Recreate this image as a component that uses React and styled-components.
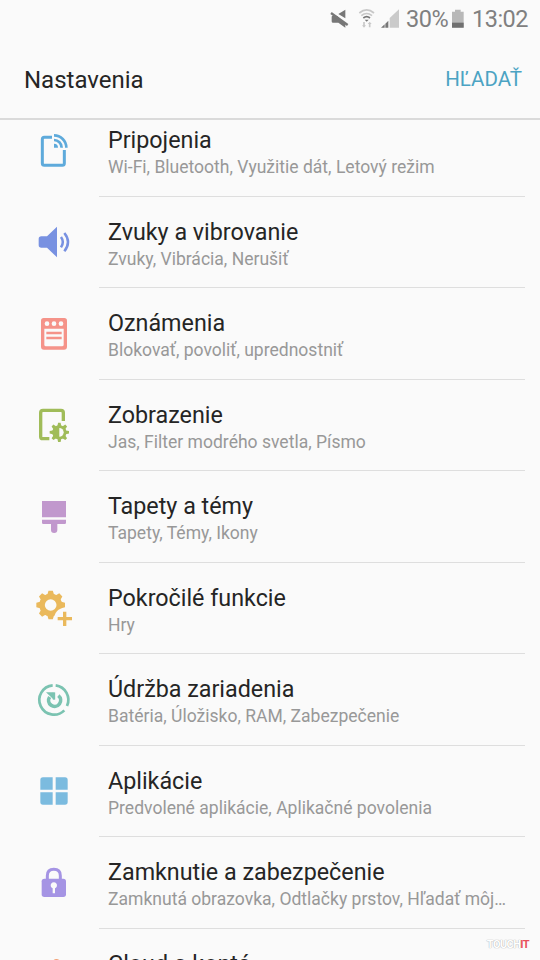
import React from 'react';
import styled, { createGlobalStyle } from 'styled-components';

const GlobalStyle = createGlobalStyle`
  html, body { margin: 0; padding: 0; background: #fafafa; overflow: hidden; }
  * { box-sizing: border-box; }
`;

const Screen = styled.main`
  position: relative;
  display: flex;
  flex-direction: column;
  width: 540px;
  height: 960px;
  overflow: hidden;
  background: #fafafa;
  font-family: Roboto, "Noto Sans", sans-serif;
`;

const StatusBar = styled.div`
  display: flex;
  align-items: center;
  justify-content: flex-end;
  height: 38px;
  padding-right: 12px;
  color: #808080;
  font-size: 23.5px;
  line-height: 38px;
`;

const StatusIcons = styled.svg`
  width: 80px;
  height: 38px;
  margin-right: 6px;
`;

const Percent = styled.span`
  width: 42px;
  white-space: nowrap;
  letter-spacing: -0.5px;
`;

const Battery = styled.svg`
  width: 14px;
  height: 38px;
  margin-right: 7px;
  margin-left: 3px;
`;

const Clock = styled.span`
  width: 56px;
  white-space: nowrap;
  text-align: right;
  letter-spacing: -0.5px;
`;

const Header = styled.header`
  display: flex;
  align-items: center;
  justify-content: space-between;
  height: 82px;
  padding: 0 18px 0 24px;
  border-bottom: 2px solid #dadada;
`;

const Heading = styled.h1`
  margin: 3px 0 0;
  color: #252525;
  font-size: 24px;
  font-weight: 400;
  line-height: 28px;
`;

const SearchButton = styled.button`
  margin-top: 1px;
  padding: 0;
  border: 0;
  background: none;
  color: #4ba3c3;
  font: 400 20.5px/28px Roboto, sans-serif;
`;

const List = styled.ul`
  flex: 1;
  min-height: 0;
  margin: 0;
  padding: 0;
  overflow: hidden;
  list-style: none;
`;

const Row = styled.li`
  display: flex;
  height: 91.5px;
  padding: 0 15px 0 24px;

  &:first-child { margin-top: -15px; }
`;

const RowIcon = styled.svg`
  flex: none;
  width: 60px;
  height: 60px;
  margin: ${({ $top }) => $top}px 15px 0 0;
`;

const RowText = styled.div`
  flex: 1;
  min-width: 0;
  padding: 21px 0 0 9px;
  border-bottom: 1px solid #dedede;
`;

const Title = styled.div`
  color: #252525;
  font-size: 23.3px;
  line-height: 28px;
  white-space: nowrap;
`;

const Summary = styled.div`
  margin-top: 3px;
  color: #989898;
  font-size: 17.55px;
  line-height: 21px;
  white-space: nowrap;
`;

const Watermark = styled.div`
  position: absolute;
  right: 11px;
  bottom: 8px;
  color: #fff;
  font: 700 11px/14px Roboto, sans-serif;
  letter-spacing: -0.6px;
  text-shadow: 0 0 1px #aaa, 0 0 1px #bbb;
`;

const WatermarkAccent = styled.span`
  color: #e8505a;
  text-shadow: none;
`;

const gearPath = (cx, cy, outer, inner, half) => {
  const points = [];
  for (let i = 0; i < 8; i += 1) {
    const angle = (i * Math.PI) / 4;
    [[inner, -half * 1.5], [outer, -half], [outer, half], [inner, half * 1.5]].forEach(([r, t]) => {
      points.push(
        `${(cx + r * Math.cos(angle) - t * Math.sin(angle)).toFixed(1)} ${(cy + r * Math.sin(angle) + t * Math.cos(angle)).toFixed(1)}`
      );
    });
  }
  return `M${points.join('L')}Z`;
};

const icons = {
  connections: (
    <g fill="none" stroke="#5eaadb" strokeWidth="9">
      <path d="M84 52H61q-6 0-6 6v72q0 6 6 6h54q6 0 6-6V90" />
      <path d="M90 46a37 37 0 0 1 37 37M90 60a23 23 0 0 1 23 23" strokeWidth="8" />
      <path d="M90 71a12 12 0 0 1 12 12H90z" fill="#5eaadb" stroke="none" />
    </g>
  ),
  sound: (
    <g fill="#7891e1">
      <path d="M99 44v92L69 107H52q-8 0-8-8V81q0-8 8-8h17z" />
      <path d="M111 75q11 15 0 31M121 63q22 27 0 55" fill="none" stroke="#7891e1" strokeWidth="7.5" />
    </g>
  ),
  notifications: (
    <g>
      <path fillRule="evenodd" fill="#f59389" d="M59 42h62q8 0 8 8v78q0 9-9 9H60q-9 0-9-9V50q0-8 8-8zM61 74v48q0 5 5 5h48q5 0 5-5V74z" />
      <g fill="#fafafa"><circle cx="69" cy="59" r="7" /><circle cx="90" cy="59" r="7" /><circle cx="111" cy="59" r="7" /></g>
      <path d="M67 87h46M67 102h46" stroke="#f59389" strokeWidth="8" />
    </g>
  ),
  display: (
    <g>
      <path d="M76 131H56q-6 0-6-6V53q0-7 7-7h54q7 0 7 7v25" fill="none" stroke="#a0bc59" strokeWidth="10" />
      <path d={gearPath(106, 112, 29, 20, 3.8)} fill="#a0bc59" />
      <circle cx="106" cy="112" r="21" fill="#a0bc59" />
      <path d="M106 99a13 13 0 0 1 0 26z" fill="#fafafa" />
    </g>
  ),
  themes: (
    <g fill="#c198cd">
      <path d="M54 42h72v49H54zM54 98h72v9q0 4-4 4h-22v18q0 9-9.500 9t-9.500-9v-18H58q-4 0-4-4z" />
    </g>
  ),
  advanced: (
    <g>
      <path d={gearPath(80, 81, 43, 32, 6.5)} fill="#eab95c" />
      <circle cx="80" cy="81" r="34" fill="#eab95c" />
      <circle cx="80" cy="81" r="17.500" fill="#fafafa" />
      <path d="M124 90c-22 0-34 14-34 36h34z" fill="#fafafa" />
      <path d="M122 101v43M101 122h43" stroke="#eab95c" strokeWidth="10" />
    </g>
  ),
  maintenance: (
    <g fill="none" stroke="#7bc3b1">
      <path d="M86 46A44 44 0 1 0 121 121M95 46A44 44 0 0 1 129 108" strokeWidth="8" />
      <path d="M77 81A18 18 0 1 0 103 77" strokeWidth="11" />
      <path d="M90 67v22" strokeWidth="7" />
      <path d="M66 67h22v21z" fill="#7bc3b1" stroke="none" />
    </g>
  ),
  apps: (
    <g fill="#7bbbdf">
      <path d="M57 46h29v37H49V54q0-8 8-8zM95 46h28q8 0 8 8v29H95zM49 91h37v37H57q-8 0-8-8zM95 91h36v29q0 8-8 8H95z" />
    </g>
  ),
  lock: (
    <g>
      <path d="M70 79V68q0-19 19.500-19T109 68v11" fill="none" stroke="#a594e4" strokeWidth="9" />
      <rect x="53" y="77" width="73" height="55" rx="8" fill="#a594e4" />
      <path d="M86 121v-15a9.500 9.500 0 1 1 7 0v15z" fill="#fafafa" />
    </g>
  ),
  cloud: (
    <path d="M86 90q10-12 24 0l18 24H70z" fill="#f2a073" />
  ),
};

const rows = [
  { icon: 'connections', top: 15, title: 'Pripojenia', summary: 'Wi-Fi, Bluetooth, Využitie dát, Letový režim' },
  { icon: 'sound', top: 15.5, title: 'Zvuky a vibrovanie', summary: 'Zvuky, Vibrácia, Nerušiť' },
  { icon: 'notifications', top: 16, title: 'Oznámenia', summary: 'Blokovať, povoliť, uprednostniť' },
  { icon: 'display', top: 15.5, title: 'Zobrazenie', summary: 'Jas, Filter modrého svetla, Písmo' },
  { icon: 'themes', top: 16, title: 'Tapety a témy', summary: 'Tapety, Témy, Ikony' },
  { icon: 'advanced', top: 15.5, title: 'Pokročilé funkcie', summary: 'Hry' },
  { icon: 'maintenance', top: 16, title: 'Údržba zariadenia', summary: 'Batéria, Úložisko, RAM, Zabezpečenie' },
  { icon: 'apps', top: 16.5, title: 'Aplikácie', summary: 'Predvolené aplikácie, Aplikačné povolenia' },
  { icon: 'lock', top: 16, title: 'Zamknutie a zabezpečenie', summary: 'Zamknutá obrazovka, Odtlačky prstov, Hľadať môj…' },
  { icon: 'cloud', top: 2, title: 'Cloud a kontá', summary: '' },
];

export default function App() {
  return (
    <>
      <GlobalStyle />
      <Screen>
        <StatusBar>
          <StatusIcons viewBox="-21 0 240 114">
            <g fill="#777">
              <path d="M34 42L55 29v26zM17 47h13l25 23v13L34 68H17q-3 0-3-4V51q0-4 3-4z" />
              <path d="M14 33L64 70" stroke="#fafafa" strokeWidth="4" />
              <path d="M12 39l50 36" stroke="#777" strokeWidth="7" />
            </g>
            <g fill="none" strokeWidth="5">
              <path d="M97 39q22-19 44 0M103 47q16-13 32 0" stroke="#c8c8c8" />
              <path d="M109 54q10-8 20 0" stroke="#777" />
              <path d="M113 59h12l-6 6z" fill="#777" />
              <path d="M111 66v12M128 82V69" stroke="#c8c8c8" />
              <path d="M105 76h12l-6 7zM122 72h12l-6-7z" fill="#c8c8c8" />
            </g>
            <path d="M188 54L216 28v55h-28z" fill="#cacaca" />
            <path d="M162 83l11-10v10zM175 83V71l9-9v21z" fill="#777" />
          </StatusIcons>
          <Percent>30%</Percent>
          <Battery viewBox="0 0 42 114">
            <path d="M3 35h9v-6h17v6h9v48H3z" fill="#b8b8b8" />
            <path d="M3 68h35v15H3z" fill="#707070" />
          </Battery>
          <Clock>13:02</Clock>
        </StatusBar>
        <Header>
          <Heading>Nastavenia</Heading>
          <SearchButton type="button">HĽADAŤ</SearchButton>
        </Header>
        <List>
          {rows.map(({ icon, top, title, summary }) => (
            <Row key={icon}>
              <RowIcon $top={top} viewBox="0 0 180 180">{icons[icon]}</RowIcon>
              <RowText>
                <Title>{title}</Title>
                <Summary>{summary}</Summary>
              </RowText>
            </Row>
          ))}
        </List>
        <Watermark>TOUCH<WatermarkAccent>IT</WatermarkAccent></Watermark>
      </Screen>
    </>
  );
}
